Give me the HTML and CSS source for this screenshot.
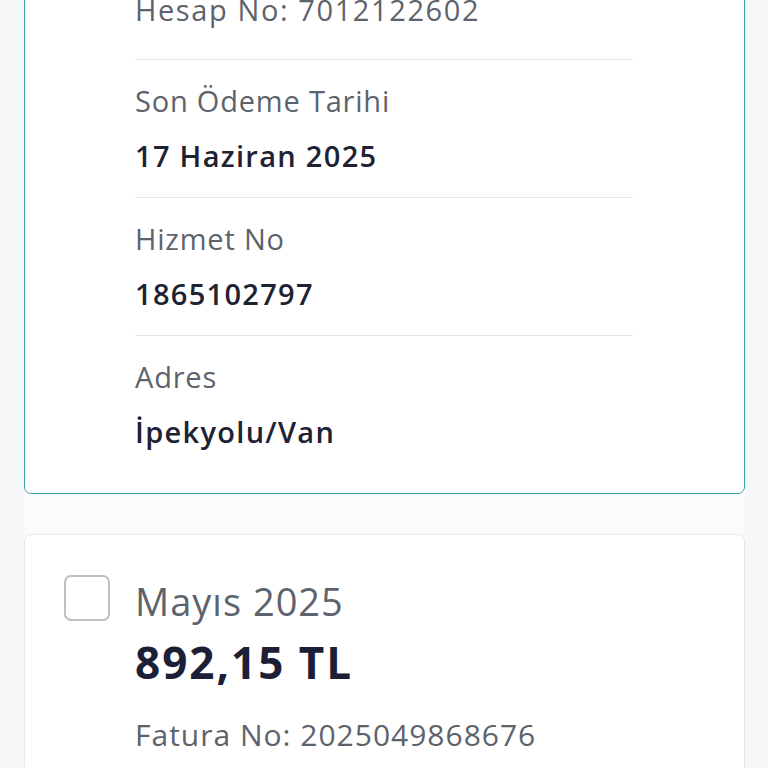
FILE: index.html
```html
<!DOCTYPE html>
<html lang="tr">
<head>
  <meta charset="UTF-8" />
  <meta name="viewport" content="width=device-width, initial-scale=1.0"/>
  <title>Faturalar</title>
  <link rel="stylesheet" href="styles.css">
</head>
<body>
  <div class="bill-list">
    <!-- selected bill, scrolled up -->
    <div class="bill selected">
      <div class="bill-top">Hesap No: 7012122602</div>
      <div class="detail">
        <div class="detail-label">Son Ödeme Tarihi</div>
        <div class="detail-value">17 Haziran 2025</div>
      </div>
      <div class="detail">
        <div class="detail-label">Hizmet No</div>
        <div class="detail-value">1865102797</div>
      </div>
      <div class="detail">
        <div class="detail-label">Adres</div>
        <div class="detail-value">İpekyolu/Van</div>
      </div>
    </div>

    <div class="bill">
      <div class="bill-head">
        <div class="check"></div>
        <div class="bill-info">
          <div class="bill-month">Mayıs 2025</div>
          <div class="bill-amount">892,15 TL</div>
          <div class="bill-no">Fatura No: 2025049868676</div>
        </div>
      </div>
    </div>
  </div>
</body>
</html>
```

FILE: styles.css
```css
* {
  box-sizing: border-box;
  margin: 0;
  padding: 0;
}

body {
  font-family: 'Open Sans', 'Noto Sans', sans-serif;
  background: #f6f7f9;
  height: 100vh;
  overflow: hidden;
}

.bill-list {
  margin: -9px 23px 0 24px;
  background: #fbfbfc;
  display: flex;
  flex-direction: column;
  gap: 40px;
}

.bill {
  background: #fff;
  border: 1px solid #e6e8ec;
  border-radius: 7px;
  padding: 40px 111px 20px 110px;
}

.bill.selected {
  border: 1.5px solid #3fa29d;
  padding-top: 0;
}

.bill-top {
  font-size: 29px;
  line-height: 36px;
  letter-spacing: 1.6px;
  color: #5d636c;
  padding-bottom: 31px;
  border-bottom: 1px solid #e4e5e8;
}

.detail {
  padding: 23px 0;
  border-bottom: 1px solid #e4e5e8;
}

.detail:last-child {
  border-bottom: none;
}

.detail-label {
  font-size: 29px;
  line-height: 36px;
  letter-spacing: 0.8px;
  color: #5d636c;
  margin-bottom: 19px;
}

.detail-value {
  font-size: 29px;
  line-height: 36px;
  letter-spacing: 1.3px;
  font-weight: 600;
  color: #1e2232;
}

.bill-head {
  display: flex;
  margin-left: -71px;
}

.check {
  width: 46px;
  height: 46px;
  border: 2px solid #bcc0c5;
  border-radius: 7px;
  margin-right: 25px;
  flex-shrink: 0;
}

.bill-month {
  margin-top: 3px;
  font-size: 38px;
  line-height: 46px;
  letter-spacing: 1px;
  color: #5d636c;
}

.bill-amount {
  margin-top: 13px;
  font-size: 44px;
  line-height: 50px;
  letter-spacing: 2px;
  font-weight: 700;
  color: #1b2036;
}

.bill-no {
  margin-top: 30px;
  font-size: 30px;
  line-height: 36px;
  letter-spacing: 1px;
  color: #5d636c;
}
```
